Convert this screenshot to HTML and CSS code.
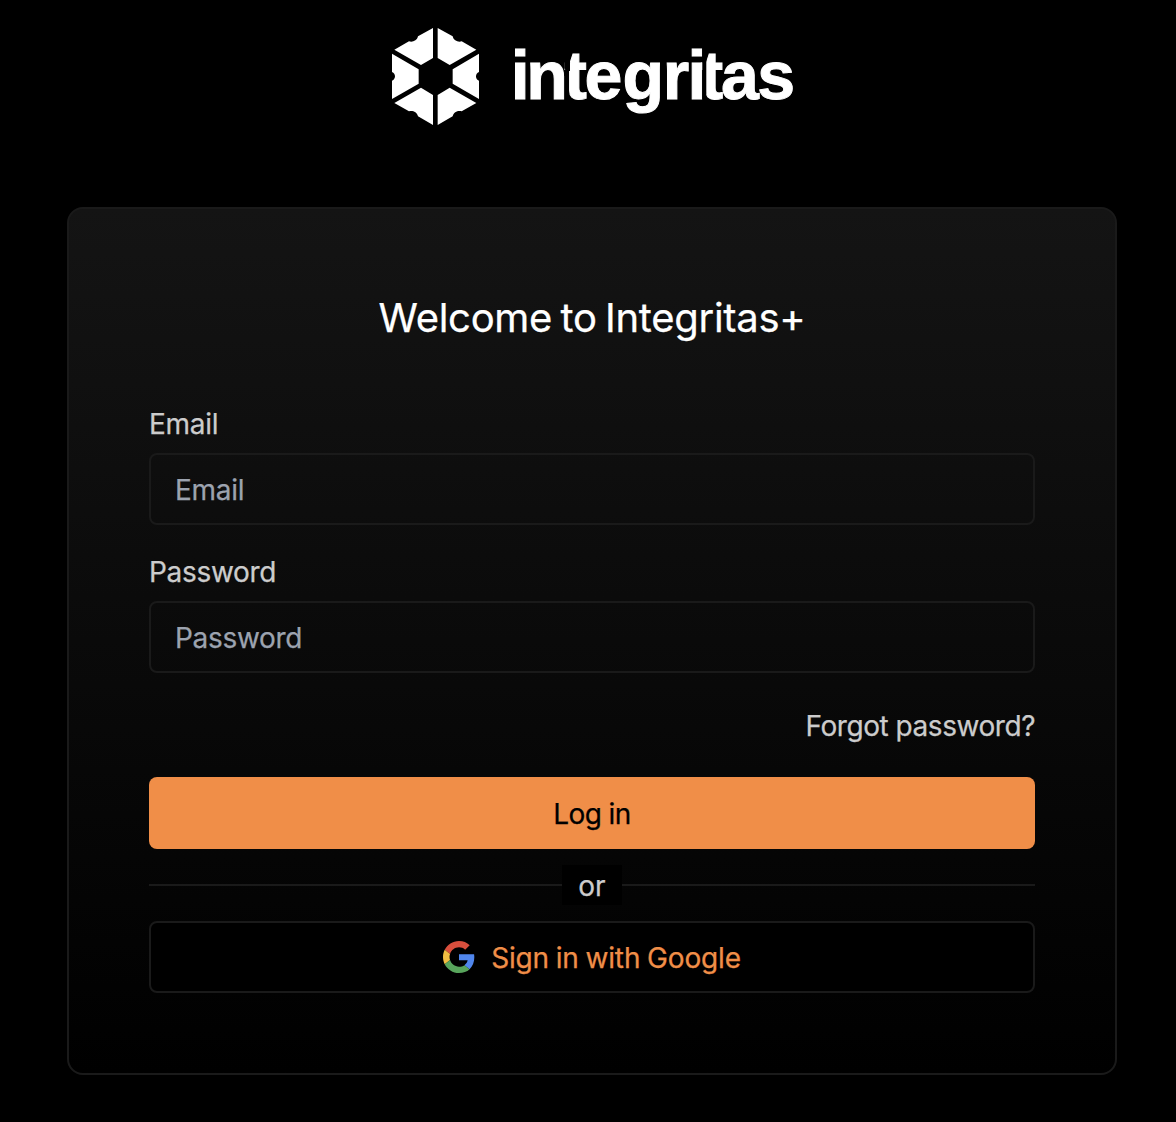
FILE: index.html
```html
<!DOCTYPE html>
<html lang="en">
<head>
<meta charset="utf-8">
<title>Integritas+ | Log in</title>
<link rel="stylesheet" href="styles.css">
</head>
<body>
<header class="header">
  <svg class="logo" width="402" height="98" viewBox="392 28 402 98" role="img" aria-label="integritas">
    <g fill="#fff" transform="translate(380 16) scale(.33333)">
      <path d="M159 36V126L123 147L43 101L87 76C97 79 111 75 114 61Z"/>
      <path d="M173 36V126L209 147L289 101L245 76C235 79 221 75 218 61Z"/>
      <path d="M36 113L116 160V203L36 249V194C48 190 48 172 36 168Z"/>
      <path d="M297 113L218 160V203L297 249V194C285 190 285 172 297 168Z"/>
      <path d="M159 327V237L123 215L43 261L87 286C97 283 111 287 114 301Z"/>
      <path d="M173 327V237L209 215L289 261L245 286C235 283 221 287 218 301Z"/>
    </g>
    <text class="wordmark" y="98.5" x="510.7 526.2 564.3 584.4 622.6 662.8 687.4 700.6 721 757.2">integritas</text>
    <path d="M564.3 45h5.7v26h-4.2l-1.5-3zM702.3 45h4v54h-4z"/>
  </svg>
</header>
<main class="card">
  <h1 class="title"><span class="title-text">Welcome to Integritas+</span></h1>
  <form class="form">
    <div class="field">
      <label class="label" for="email">Email</label>
      <input class="input" id="email" type="email" placeholder="Email">
    </div>
    <div class="field">
      <label class="label" for="password">Password</label>
      <input class="input" id="password" type="password" placeholder="Password">
    </div>
    <a class="forgot">Forgot password?</a>
    <button class="button primary" type="button">Log in</button>
    <div class="divider"><span class="or">or</span></div>
    <button class="button google" type="button">
      <svg width="32" height="32" viewBox="0 0 48 48" aria-hidden="true">
        <path fill="#d94f3d" d="M24 9.5c3.54 0 6.71 1.22 9.21 3.6l6.85-6.85C35.9 2.38 30.47 0 24 0 14.62 0 6.51 5.38 2.56 13.22l7.98 6.19C12.43 13.72 17.74 9.5 24 9.5z"/>
        <path fill="#5086ec" d="M46.98 24.55c0-1.57-.15-3.09-.38-4.55H24v9.02h12.94c-.58 2.96-2.26 5.48-4.78 7.18l7.73 6c4.51-4.18 7.09-10.36 7.09-17.65z"/>
        <path fill="#f2bd42" d="M10.53 28.59c-.48-1.45-.76-2.99-.76-4.59s.27-3.14.76-4.59l-7.98-6.19C.92 16.46 0 20.12 0 24c0 3.88.92 7.54 2.56 10.78l7.97-6.19z"/>
        <path fill="#58a55c" d="M24 48c6.48 0 11.93-2.13 15.89-5.81l-7.73-6c-2.15 1.45-4.92 2.3-8.16 2.3-6.26 0-11.57-4.22-13.47-9.91l-7.98 6.19C6.51 42.62 14.62 48 24 48z"/>
      </svg>
      <span class="google-text">Sign in with Google</span>
    </button>
  </form>
</main>
</body>
</html>
```
FILE: styles.css
```css
* { box-sizing: border-box; }
body {
  margin: 0;
  min-height: 1122px;
  background: #000;
  color: #ccc;
  font: 400 28px/40px Inter, sans-serif;
  -webkit-text-stroke: .25px currentColor;
}
.header {
  height: 207px;
  padding: 28px 0 0 392px;
}
.logo { display: block; }
.wordmark {
  font: 700 68px "Liberation Sans", sans-serif;
  fill: #fff;
  stroke: #fff;
  stroke-width: 1px;
  -webkit-text-stroke: 1px #fff;
}
.card {
  width: 1050px;
  height: 868px;
  margin-left: 67px;
  padding: 80px;
  border: 2px solid #1a1a1a;
  border-radius: 16px;
  background: linear-gradient(#141414, #000);
}
.title {
  margin: 0 0 56px;
  color: #fff;
  font-size: 40px;
  font-weight: 400;
  line-height: 57px;
  text-align: center;
  -webkit-text-stroke: .25px #fff;
}
.title-text {
  letter-spacing: -.3px;
  word-spacing: -2.5px;
}
.form {
  display: flex;
  flex-direction: column;
  padding-top: 2px;
}
.field {
  display: flex;
  flex-direction: column;
  justify-content: space-between;
  height: 121px;
  margin-bottom: 27px;
}
.label {
  height: 40px;
  letter-spacing: -.3px;
}
.input {
  width: 100%;
  height: 72px;
  padding: 2px 24px 0;
  border: 2px solid #1a1a1a;
  border-radius: 8px;
  background: transparent;
  color: #ccc;
  font: inherit;
  letter-spacing: -.3px;
}
.input::placeholder {
  color: #9ca3af;
  opacity: 1;
  -webkit-text-stroke: .25px #9ca3af;
}
.forgot {
  align-self: flex-end;
  margin: 6px 0 31px;
  letter-spacing: -.45px;
}
.button {
  display: flex;
  align-items: center;
  justify-content: center;
  gap: 16px;
  height: 72px;
  padding: 0;
  border: 0;
  border-radius: 8px;
  font: inherit;
  letter-spacing: -.6px;
}
.primary {
  padding-top: 2px;
  background: #f08e48;
  color: #000;
  -webkit-text-stroke: .25px #000;
}
.divider {
  display: flex;
  align-items: center;
  height: 40px;
  margin: 16px 0;
}
.divider::before, .divider::after {
  content: "";
  flex: 1;
  height: 2px;
  background: #1a1a1a;
}
.or {
  width: 60px;
  height: 40px;
  padding-top: 1px;
  background: #000;
  text-align: center;
}
.google {
  border: 2px solid #1a1a1a;
  background: #000;
  color: #f08e48;
  -webkit-text-stroke: .25px #f08e48;
}
.google-text {
  padding-top: 1px;
  letter-spacing: -.15px;
  word-spacing: -1px;
}
```
